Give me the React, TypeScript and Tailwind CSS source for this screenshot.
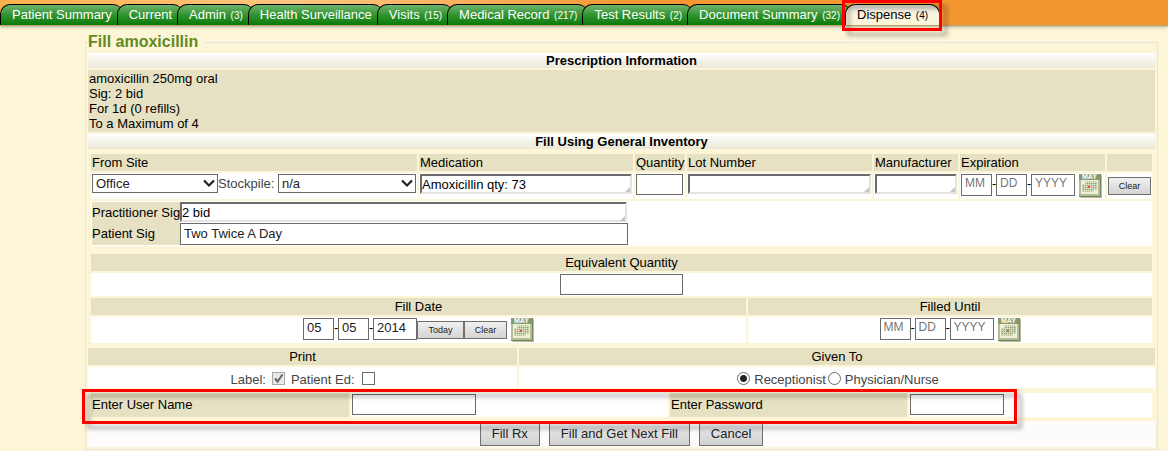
import { useState } from 'react';
import type { ReactNode } from 'react';
import clsx from 'clsx';

interface TabData {
  label: string;
  count?: number;
}

const tabs: TabData[] = [
  { label: 'Patient Summary' },
  { label: 'Current' },
  { label: 'Admin', count: 3 },
  { label: 'Health Surveillance' },
  { label: 'Visits', count: 15 },
  { label: 'Medical Record', count: 217 },
  { label: 'Test Results', count: 2 },
  { label: 'Document Summary', count: 32 },
  { label: 'Dispense', count: 4 },
];

const inputClass = 'border border-[#6b6b6b] bg-white px-[3px] text-[13px] text-[#222] outline-none';

// Red frame with a drop shadow, laid over the part that needs attention
const Highlight = ({ className }: { className: string }) => (
  <div
    className={clsx(
      'pointer-events-none absolute z-20 border-3 border-[#fe0000] drop-shadow-[5px_5px_2px_rgba(0,0,0,0.3)]',
      className
    )}
  />
);

const Tab = ({ tab, active }: { tab: TabData; active: boolean }) => (
  <a
    href="#"
    className={clsx(
      'relative -ml-[6px] h-[21px] rounded-t-[10px] border-t border-l border-black pr-[11px] pl-[11px] leading-[20px] whitespace-nowrap first:ml-0',
      active
        ? 'border-r bg-linear-to-b from-[#ddd9d0] via-[#f8f3e0] via-40% to-[#fcf6da] text-black'
        : 'bg-linear-to-b from-[#6fb36c] via-[#2f942e] via-50% to-[#067a06] text-white'
    )}
  >
    {tab.label}{' '}
    {tab.count !== undefined && <span className="ml-px text-[10px]">({tab.count})</span>}
    {active && <Highlight className="-top-[5px] -right-[3px] -bottom-[6px] -left-[4px]" />}
  </a>
);

const Bar = ({ children }: { children: ReactNode }) => (
  <h2 className="h-[15px] bg-linear-to-b from-white to-[#ebe8d6] text-center text-[13px] leading-[15px] font-bold">
    {children}
  </h2>
);

const HeadCell = ({ children }: { children: ReactNode }) => (
  <div className="h-[17px] bg-[#e6e1c2] text-center leading-[17px]">{children}</div>
);

const Select = ({ id, label, value, className }: { id: string; label: string; value: string; className: string }) => (
  <div className={clsx('relative', className)}>
    <select
      id={id}
      aria-label={label}
      className="block h-[19px] w-full appearance-none border border-[#6b6b6b] bg-white pl-[3px] text-[13px] leading-[17px] text-[#222] outline-none"
    >
      <option>{value}</option>
    </select>
    <svg className="pointer-events-none absolute top-[5px] right-[3px] h-[9px] w-[12px]" viewBox="0 0 12 9" fill="none">
      <path d="M1 1.5L6 6.5L11 1.5" stroke="#222" strokeWidth="2.2" />
    </svg>
  </div>
);

const TextArea = ({ label, value = '', className }: { label: string; value?: string; className?: string }) => (
  <div className={clsx('relative', className)}>
    <textarea
      aria-label={label}
      rows={1}
      defaultValue={value}
      className="block h-[20px] w-full resize-none overflow-hidden border-2 border-t-[#6b6b6b] border-r-[#e3e3e3] border-b-[#e3e3e3] border-l-[#6b6b6b] bg-white text-[13px] leading-[17px] outline-none"
    />
    <svg className="pointer-events-none absolute right-[2px] bottom-[2px] h-[5px] w-[5px]" viewBox="0 0 5 5">
      <path d="M5 0V5H0Z" fill="#c4c4c4" />
    </svg>
  </div>
);

const SmallButton = ({ children, className }: { children: ReactNode; className: string }) => (
  <button
    type="button"
    className={clsx(
      'h-[18px] border border-[#707070] bg-linear-to-b from-[#f0f0f0] to-[#d4d4d4] text-[9px] leading-[16px] text-[#222]',
      className
    )}
  >
    {children}
  </button>
);

const CalendarButton = () => (
  <button type="button" aria-label="Pick a date" className="ml-1 h-[24px] w-[23px]">
    <svg viewBox="0 0 23 24" className="h-[24px] w-[23px]">
      <rect x="1" y="1" width="22" height="23" rx="1" fill="#b9b9a8" />
      <rect x="0" y="0" width="22" height="23" fill="#75865a" />
      <rect x="0" y="0" width="21" height="22" fill="#b3bd98" />
      <rect x="0" y="0" width="21" height="6" fill="#8a9a6c" />
      <text x="10.5" y="5" textAnchor="middle" fontSize="7" fontWeight="bold" fontFamily="Liberation Sans, Arial, sans-serif" fill="#fff">
        MAY
      </text>
      <rect x="2" y="6" width="17" height="14" fill="#eef0dc" />
      <path d="M6.5 7.5H17.5V15.5H14.5V17.5H3.5V10.5H6.5Z" fill="#8f9e72" />
      <path
        d="M3.5 10.5H17.5M3.5 12.5H17.5M3.5 14.5H17.5M3.5 16.5H14.5M6.5 8.5H17.5M5.5 10V18M7.5 7V18M9.5 7V18M11.5 7V18M13.5 7V18M15.5 7V16"
        stroke="#e3e8cc"
        strokeWidth="0.7"
      />
      <rect x="9" y="12" width="1.5" height="1.5" fill="#f00" />
    </svg>
  </button>
);

interface DateFieldsProps {
  name: string;
  month?: string;
  day?: string;
  year?: string;
}

const DateFields = ({ name, month, day, year }: DateFieldsProps) => {
  const field = clsx(inputClass, 'h-[22px] placeholder:text-[12px] placeholder:text-[#777]', month ? 'pb-[3px]' : 'pb-[5px]');
  return (
    <>
      <input aria-label={`${name} month`} placeholder="MM" defaultValue={month} className={clsx(field, 'w-[31px]')} />
      <span className="w-1">-</span>
      <input aria-label={`${name} day`} placeholder="DD" defaultValue={day} className={clsx(field, 'w-[31px]')} />
      <span className="w-1">-</span>
      <input aria-label={`${name} year`} placeholder="YYYY" defaultValue={year} className={clsx(field, 'w-[44px]')} />
    </>
  );
};

const columns = [
  { title: 'From Site', width: 'w-[326px]' },
  { title: 'Medication', width: 'w-[214px]' },
  { title: 'Quantity', width: 'w-[50px]' },
  { title: 'Lot Number', width: '' },
  { title: 'Manufacturer', width: 'w-[84px]' },
  { title: 'Expiration', width: 'w-[145px]' },
  { title: '', width: 'w-[45px]' },
];

const InventoryTable = () => (
  <div className="mt-[3px] px-px">
    <table className="w-full table-fixed border-separate border-spacing-[2px]">
      <thead>
        <tr className="h-[17px] bg-[#e6e1c2] text-left">
          {columns.map((col) => (
            <th key={col.title} className={clsx('p-0 pl-px leading-[17px] font-normal whitespace-nowrap', col.width)}>
              {col.title}
            </th>
          ))}
        </tr>
      </thead>
      <tbody>
        <tr className="h-[26px] bg-white align-top">
          <td className="p-px">
            <div className="flex">
              <Select id="site" label="From Site" value="Office" className="w-[126px]" />
              <label htmlFor="stockpile" className="w-[60px] leading-[19px] text-[#444]">Stockpile:</label>
              <Select id="stockpile" label="Stockpile" value="n/a" className="flex-1" />
            </div>
          </td>
          <td className="p-px"><TextArea label="Medication" value="Amoxicillin qty: 73" /></td>
          <td className="p-px"><input aria-label="Quantity" className={clsx(inputClass, 'block h-[21px] w-[47px]')} /></td>
          <td className="p-px"><TextArea label="Lot Number" /></td>
          <td className="p-px"><TextArea label="Manufacturer" /></td>
          <td className="p-px">
            <div className="flex">
              <DateFields name="Expiration" />
              <CalendarButton />
            </div>
          </td>
          <td className="p-px pt-1"><SmallButton className="block w-full">Clear</SmallButton></td>
        </tr>
      </tbody>
    </table>
  </div>
);

export default function App() {
  const [givenTo, setGivenTo] = useState('Receptionist');

  return (
    <div className="bg-[#fcf5d8] pb-px font-['Liberation_Sans',Arial,sans-serif] text-[13px] text-black">
      <nav className="flex h-[26px] border-b border-[#b9a36a] bg-linear-to-r from-[#fbb04a] via-[#fdc67e] via-25% to-[#f49730] to-55% pt-1 shadow-[0_1px_3px_rgba(0,0,0,0.3)]">
        {tabs.map((tab) => (
          <Tab key={tab.label} tab={tab} active={tab.label === 'Dispense'} />
        ))}
      </nav>

      <form onSubmit={(e) => e.preventDefault()}>
        <fieldset className="mt-[7px] mr-[10px] ml-[85px] min-w-0 border border-[#e3e3e3] px-[2px] pt-[2px] pb-[2px]">
          <legend className="pr-[7px] text-[16px] leading-[18px] font-bold text-[#628a1e]">Fill amoxicillin</legend>

          <Bar>Prescription Information</Bar>
          <div className="my-[2px] bg-[#e6e1c2] px-px py-px leading-[15px]">
            <p>amoxicillin 250mg oral</p>
            <p>Sig: 2 bid</p>
            <p>For 1d (0 refills)</p>
            <p>To a Maximum of 4</p>
          </div>

          <Bar>Fill Using General Inventory</Bar>
          <InventoryTable />

          <div className="mx-[3px] bg-white p-px">
            <div className="flex h-[21px]">
              <span className="w-[88px] bg-[#e6e1c2] leading-[21px] whitespace-nowrap">Practitioner Sig</span>
              <TextArea label="Practitioner Sig" value="2 bid" className="w-[447px]" />
            </div>
            <div className="flex h-[22px]">
              <label htmlFor="patient-sig" className="w-[88px] bg-[#e6e1c2] leading-[21px]">Patient Sig</label>
              <input id="patient-sig" defaultValue="Two Twice A Day" className={clsx(inputClass, 'h-[22px] w-[448px] pb-[2px]')} />
            </div>
          </div>

          <div className="mx-[3px] mt-2 space-y-[2px]">
            <HeadCell><label htmlFor="equivalent">Equivalent Quantity</label></HeadCell>
            <div className="flex h-[23px] items-center justify-center bg-white">
              <input id="equivalent" className={clsx(inputClass, 'h-[21px] w-[123px]')} />
            </div>
            <div className="grid grid-cols-[655fr_404fr] gap-[2px]">
              <HeadCell>Fill Date</HeadCell>
              <HeadCell>Filled Until</HeadCell>
              <div className="flex h-[26px] justify-center bg-white pt-px">
                <DateFields name="Fill date" month="05" day="05" year="2014" />
                <SmallButton className="mt-[3px] w-[47px]">Today</SmallButton>
                <SmallButton className="mt-[3px] w-[43px]">Clear</SmallButton>
                <CalendarButton />
              </div>
              <div className="flex h-[26px] justify-center bg-white pt-px">
                <DateFields name="Filled until" />
                <CalendarButton />
              </div>
            </div>
          </div>

          <div className="mt-[5px] grid grid-cols-[429fr_636fr] gap-[2px]">
            <HeadCell>Print</HeadCell>
            <HeadCell>Given To</HeadCell>
            <div className="flex h-[21px] items-center justify-center bg-white pt-px text-[#444]">
              <label htmlFor="print-label" className="pt-[3px]">Label:</label>
              <span className="relative mx-[6px] h-[13px] w-[13px]">
                <input id="print-label" type="checkbox" defaultChecked disabled className="block h-[13px] w-[13px] appearance-none border border-[#aaa] bg-[#e8e8e8]" />
                <svg className="pointer-events-none absolute inset-0" viewBox="0 0 13 13" fill="none">
                  <path d="M3 6.5L5.5 9.5L10.5 2.5" stroke="#666" strokeWidth="2" />
                </svg>
              </span>
              <label htmlFor="print-ed" className="pt-[3px]">Patient Ed:</label>
              <input id="print-ed" type="checkbox" className="ml-[7px] h-[13px] w-[13px] appearance-none border border-[#6b6b6b] bg-white" />
            </div>
            <div className="flex h-[21px] items-center justify-center bg-white pt-px pl-[4px] text-[#444]">
              {['Receptionist', 'Physician/Nurse'].map((who) => (
                <label key={who} className="flex items-center">
                  <input
                    type="radio"
                    name="given-to"
                    checked={givenTo === who}
                    onChange={() => setGivenTo(who)}
                    className="mr-[4px] h-[13px] w-[13px] appearance-none rounded-full border border-[#6b6b6b] bg-white checked:bg-[radial-gradient(circle,#222_3px,#fff_4px)]"
                  />
                  <span className="pt-[3px] pr-[2px]">{who}</span>
                </label>
              ))}
            </div>
          </div>

          <div className="relative mx-[3px] mt-[5px] grid h-[23px] grid-cols-[258fr_317fr_237fr_243fr] gap-[2px] leading-[24px]">
            <label htmlFor="user-name" className="bg-[#e6e1c2] pl-px">Enter User Name</label>
            <div className="bg-white p-px">
              <input id="user-name" className={clsx(inputClass, 'block h-[21px] w-[124px]')} />
            </div>
            <label htmlFor="password" className="bg-[#e6e1c2] pl-px">Enter Password</label>
            <div className="bg-white p-px">
              <input id="password" type="password" className={clsx(inputClass, 'block h-[21px] w-[94px]')} />
            </div>
            <Highlight className="-top-1 right-[135px] -bottom-2 -left-[9px]" />
          </div>

          <div className="mt-[5px] flex h-[26px] justify-center gap-[9px] bg-[#fdfcfa] pb-px">
            {['Fill Rx', 'Fill and Get Next Fill', 'Cancel'].map((action) => (
              <button
                key={action}
                type="button"
                className="border border-[#707070] bg-linear-to-b from-[#efefef] to-[#d0d0d0] px-[11px] text-[13px] text-[#222]"
              >
                {action}
              </button>
            ))}
          </div>
        </fieldset>
      </form>
    </div>
  );
}
